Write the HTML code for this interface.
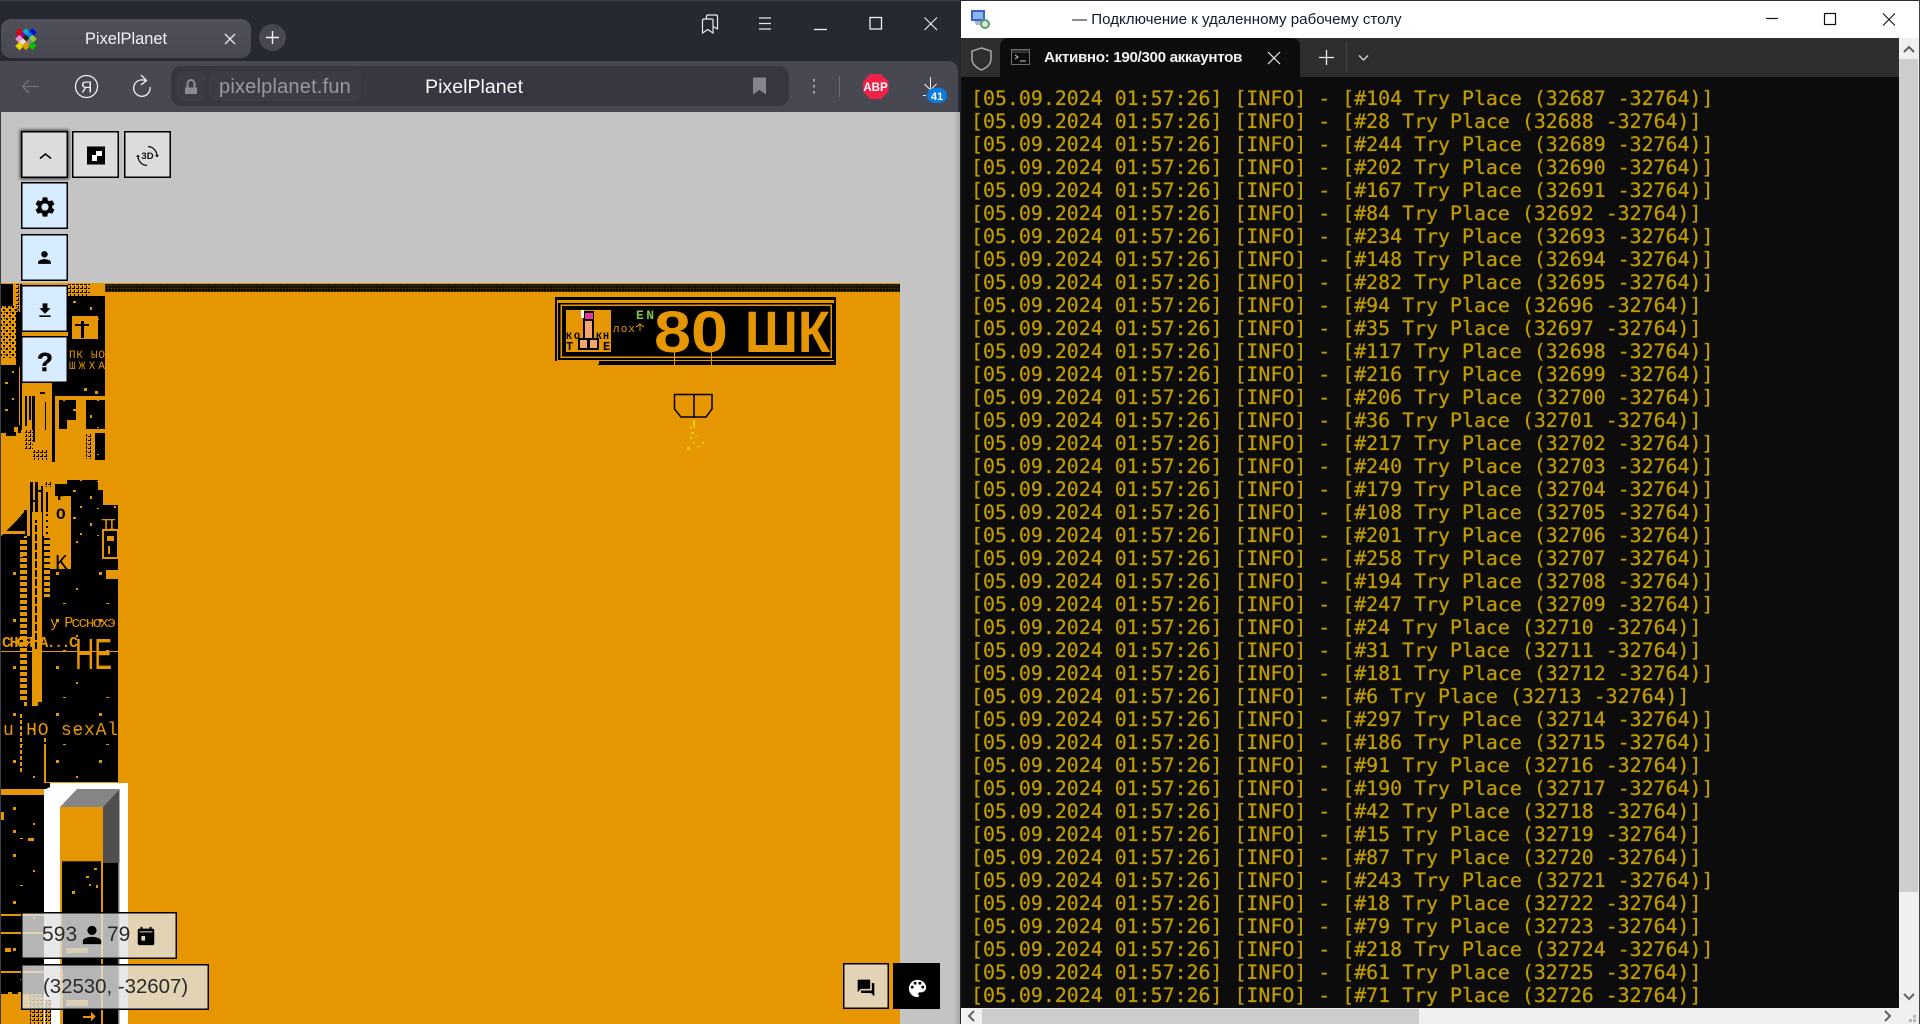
<!DOCTYPE html>
<html lang="ru"><head><meta charset="utf-8"><title>PixelPlanet</title>
<style>
html,body{margin:0;padding:0;width:1920px;height:1024px;overflow:hidden;background:#262932}
*{box-sizing:border-box}
.a{position:absolute}
body{font-family:"Liberation Sans","Noto Sans CJK SC",sans-serif;position:relative}
.btn{position:absolute;width:47px;height:47px;box-shadow:inset 0 0 0 1.5px #000}
.g{background:#dcdcdc}.b{background:#d7edff}
.btn svg{position:absolute;left:0;top:0}
pre{margin:0;font-family:"DejaVu Sans Mono","Liberation Mono",monospace;font-size:19.9px;line-height:23px;color:#c19c00;letter-spacing:0;-webkit-text-stroke:.25px #c19c00}
.box{position:absolute;background:rgba(226,226,226,.8);box-shadow:inset 0 0 0 1.5px #000;color:#2a2a2a}
</style></head><body>

<!-- LEFT BROWSER -->
<div class="a" style="left:0;top:0;width:960px;height:112px;background:#262932;overflow:hidden">
  <div class="a" style="left:0;top:0;width:960px;height:1px;background:#3c3f4a"></div>
  <div class="a" style="left:1px;top:19px;width:250px;height:39px;background:linear-gradient(#4f505a,#474852);border-radius:10px"></div>
  <div class="a" style="left:85px;top:29px;font-size:16.4px;color:#f2f2f4;line-height:20px">PixelPlanet</div>
  <div class="a" style="left:259px;top:24px;width:27px;height:27px;border-radius:50%;background:#474852"></div>
  <div class="a" style="left:0;top:61px;width:958px;height:51px;background:#474852;border-top-right-radius:10px"></div>
  <div class="a" style="left:171px;top:66px;width:618px;height:40px;background:#363741;border-radius:10px"></div>
  <div class="a" style="left:177px;top:71px;width:28px;height:30px;background:#3b3c46;border-radius:6px"></div>
  <div class="a" style="left:209px;top:71px;width:152px;height:30px;background:#3b3c46;border-radius:6px"></div>
  <div class="a" style="left:219px;top:75px;font-size:20px;line-height:24px;color:#98999f;letter-spacing:.2px">pixelplanet.fun</div>
  <div class="a" style="left:425px;top:75px;font-size:19.6px;line-height:24px;color:#fafafa;">PixelPlanet</div>
  <svg class="a" style="left:0;top:0" width="960" height="112" viewBox="0 0 960 112">
    <g>
      <rect x="16.5" y="29.5" width="6" height="6" transform="rotate(45 19.5 32.5)" fill="#e5000f"/>
      <rect x="23" y="29.5" width="6" height="6" transform="rotate(45 26 32.5)" fill="#00b3d6"/>
      <rect x="29.5" y="29.5" width="6" height="6" transform="rotate(45 32.5 32.5)" fill="#0010e0"/>
      <rect x="20" y="33" width="6" height="6" transform="rotate(45 23 36)" fill="#8a0a8a"/>
      <rect x="26.5" y="33" width="6" height="6" transform="rotate(45 29.5 36)" fill="#0a85e0"/>
      <rect x="16.5" y="36" width="6" height="6" transform="rotate(45 19.5 39)" fill="#f490c0"/>
      <rect x="23" y="36" width="6" height="6" transform="rotate(45 26 39)" fill="#222"/>
      <rect x="29.5" y="36" width="6" height="6" transform="rotate(45 32.5 39)" fill="#90d030"/>
      <rect x="20" y="39.5" width="6" height="6" transform="rotate(45 23 42.5)" fill="#dddddd"/>
      <rect x="26.5" y="39.5" width="6" height="6" transform="rotate(45 29.5 42.5)" fill="#888"/>
      <rect x="16.5" y="43" width="6" height="6" transform="rotate(45 19.5 46)" fill="#e5d900"/>
      <rect x="23" y="43" width="6" height="6" transform="rotate(45 26 46)" fill="#e59500"/>
      <rect x="29.5" y="43" width="6" height="6" transform="rotate(45 32.5 46)" fill="#02be01"/>
    </g>
    <path d="M225 34L235 44M235 34L225 44" stroke="#e8e8ea" stroke-width="1.3" fill="none"/>
    <path d="M272.5 31V44M266 37.5H279" stroke="#f0f0f0" stroke-width="1.4" fill="none"/>
    <path d="M39 86.5H22.5M29 80L22.5 86.5L29 93" stroke="#6f707a" stroke-width="1.3" fill="none"/>
    <circle cx="86.5" cy="86.5" r="11" stroke="#f0f0f0" stroke-width="1.3" fill="none"/>
    <text x="86.5" y="92.5" font-size="16" text-anchor="middle" fill="#f0f0f0" font-family="Liberation Sans">Я</text>
    <path d="M146 81A8.2 8.2 0 1 0 150 87M141 75L146.5 80.5L141 85" stroke="#f0f0f0" stroke-width="1.3" fill="none"/>
    <path d="M185 87.5H197V94H185Z" fill="#8b8c93"/><path d="M187.5 87.5V83.5A3.5 3.5 0 0 1 194.5 83.5V87.5" stroke="#8b8c93" stroke-width="2" fill="none"/>
    <path d="M753 77.5H766V94.5L759.5 90L753 94.5Z" fill="#85868d"/>
    <rect x="813" y="79" width="2" height="2.5" fill="#a0a1a8"/><rect x="813" y="85" width="2" height="2.5" fill="#a0a1a8"/><rect x="813" y="91" width="2" height="2.5" fill="#a0a1a8"/>
    <rect x="839" y="76" width="1" height="21" fill="#6a6b75"/>
    <path d="M870 74H881L888.5 81.5V91.5L881 99H870L863 91.5V81.5Z" fill="#ee2347"/>
    <text x="875.5" y="91" font-size="11.5" font-weight="700" text-anchor="middle" fill="#fff" font-family="Liberation Sans">ABP</text>
    <path d="M930.5 77V90M924.5 84L930.5 90M936.5 84L930.5 90M923 95.5H926" stroke="#eee" stroke-width="1" fill="none"/>
    <rect x="927" y="88" width="20" height="15" rx="7.5" fill="#0a7ce0"/>
    <text x="937" y="100" font-size="11" font-weight="700" text-anchor="middle" fill="#fff" font-family="Liberation Sans">41</text>
    <path d="M702.5 20.5Q702.5 19 704 19H711.5Q713 19 713 20.5V33L707.8 29.5L702.5 33ZM706.5 19V16.5Q706.5 15 708 15H716Q717.5 15 717.5 16.5V29L713 26.5" stroke="#e8e8ea" stroke-width="1.2" fill="none"/>
    <path d="M759 18H771M759 23.5H771M759 29H771" stroke="#e8e8ea" stroke-width="1.2"/>
    <path d="M814 29.5H827" stroke="#f0f0f0" stroke-width="1.3"/>
    <rect x="870" y="17.5" width="11.5" height="11.5" stroke="#f0f0f0" stroke-width="1.3" fill="none"/>
    <path d="M924.5 17.5L937 30M937 17.5L924.5 30" stroke="#f0f0f0" stroke-width="1.1"/>
  </svg>
</div>

<!-- CANVAS -->
<svg class="a" style="left:0;top:112px" width="960" height="912" viewBox="0 112 960 912" shape-rendering="crispEdges">
  <defs>
    <pattern id="dith" width="3" height="3" patternUnits="userSpaceOnUse"><rect width="3" height="3" fill="#1a1200"/><rect width="1" height="1" fill="#704900"/></pattern>
    <pattern id="rings" width="6" height="6" patternUnits="userSpaceOnUse"><rect width="6" height="6" fill="#e59600"/><rect x="0" y="0" width="2" height="2" fill="#000"/><rect x="3" y="3" width="2" height="2" fill="#000"/><rect x="4" width="1" height="1" fill="#000"/></pattern>
    <pattern id="spk" width="34" height="27" patternUnits="userSpaceOnUse"><rect width="34" height="27" fill="#000"/><rect x="5" y="4" width="3" height="2" fill="#e59600"/><rect x="22" y="10" width="2" height="3" fill="#e59600"/><rect x="12" y="20" width="2" height="2" fill="#e59600"/><rect x="29" y="22" width="2" height="1" fill="#e59600"/></pattern>
    <pattern id="spk3" width="43" height="47" patternUnits="userSpaceOnUse"><rect width="43" height="47" fill="#000"/><rect x="13" y="8" width="3" height="3" fill="#e59600"/><rect x="33" y="24" width="2" height="2" fill="#e59600"/><rect x="20" y="39" width="3" height="1" fill="#e59600"/></pattern>
    <pattern id="spk2" width="11" height="9" patternUnits="userSpaceOnUse"><rect width="11" height="9" fill="#000"/><rect x="2" y="1" width="2" height="2" fill="#e59600"/><rect x="7" y="5" width="2" height="1" fill="#e59600"/></pattern>
    <pattern id="sd" width="4" height="4" patternUnits="userSpaceOnUse"><rect width="4" height="4" fill="#e59600"/><rect width="3" height="1" fill="#000"/><rect width="1" y="2" height="2" x="2" fill="#000"/></pattern>
    <pattern id="dash" width="3" height="6" patternUnits="userSpaceOnUse"><rect width="3" height="4" fill="#e59600"/></pattern>
    <linearGradient id="shade"><stop offset="0" stop-color="#000" stop-opacity="0"/><stop offset="1" stop-color="#000" stop-opacity=".16"/></linearGradient>
  </defs>
  <rect x="0" y="112" width="960" height="912" fill="#c4c4c4"/>
  <rect x="0" y="0" width="1" height="1024" fill="#3c3f4a"/>
  <rect x="1" y="283" width="899" height="741" fill="#e59600"/>
  <rect x="105" y="284" width="795" height="8" fill="url(#dith)"/>

  <!-- upper-left art -->
  <rect x="1" y="284" width="12" height="22" fill="#000"/>
  <rect x="16" y="284" width="4" height="28" fill="url(#sd)"/>
  <rect x="1" y="306" width="16" height="52" fill="url(#rings)"/>
  <rect x="16" y="312" width="4" height="55" fill="#000"/>
  <rect x="1" y="365" width="18" height="62" fill="url(#spk)"/>
  <rect x="1" y="418" width="13" height="15" fill="#000"/>
  <rect x="6" y="432" width="10" height="4" fill="#000"/>
  <rect x="18" y="425" width="3" height="8" fill="#000"/>
  <rect x="20" y="284" width="2" height="146" fill="#000"/>

  <rect x="68" y="296" width="37" height="100" fill="url(#spk)"/>
  <rect x="68" y="284" width="22" height="12" fill="url(#sd)"/>
  <rect x="72" y="316" width="26" height="23" fill="#e59600"/>
  <rect x="81" y="321" width="3" height="17" fill="#000"/><rect x="75" y="324" width="14" height="2" fill="#000"/>
  <rect x="68" y="339" width="37" height="8" fill="#000"/>
  <rect x="68" y="347" width="37" height="23" fill="#000"/>
  <text x="69" y="358" font-size="11" fill="#e59600" font-family="Liberation Mono" textLength="36">ПК ЫО</text>
  <text x="69" y="369" font-size="11" fill="#e59600" font-family="Liberation Mono" textLength="36">ШЖХА</text>
  <rect x="68" y="370" width="37" height="13" fill="#000"/>
  <rect x="52" y="383" width="53" height="13" fill="#000"/>
  <rect x="84" y="388" width="3" height="3" fill="#e59600"/><rect x="95" y="391" width="3" height="3" fill="#e59600"/>
  <rect x="52" y="396" width="3" height="66" fill="#000"/>
  <rect x="59" y="400" width="17" height="20" fill="url(#spk)"/>
  <rect x="59" y="420" width="8" height="9" fill="#000"/>
  <rect x="86" y="400" width="19" height="29" fill="url(#spk)"/>
  <rect x="86" y="433" width="6" height="26" fill="url(#sd)"/>
  <rect x="95" y="433" width="10" height="27" fill="url(#spk)"/>
  <rect x="25" y="396" width="2" height="30" fill="#000"/><rect x="29" y="396" width="2" height="24" fill="#000"/><rect x="32" y="396" width="3" height="46" fill="#000"/>
  <rect x="25" y="430" width="8" height="20" fill="url(#sd)"/>
  <rect x="45" y="402" width="1" height="28" fill="#000"/>
  <rect x="33" y="450" width="14" height="10" fill="url(#sd)"/>
  <rect x="40" y="392" width="5" height="2" fill="#000"/>

  <!-- lower-left art -->
  <path d="M55 484H67V480H98V490H103V505H118V640H71V569H50V512H71V496H55Z" fill="url(#spk)"/>
  <rect x="55" y="484" width="12" height="4" fill="#000"/>
  <rect x="30" y="482" width="3" height="58" fill="#000"/><rect x="35" y="482" width="3" height="58" fill="#000"/><rect x="41" y="486" width="2" height="54" fill="#000"/><rect x="45" y="481" width="7" height="6" fill="url(#sd)"/><rect x="46" y="492" width="2" height="48" fill="#000"/><rect x="24" y="510" width="3" height="30" fill="#000"/>
  <rect x="36" y="490" width="5" height="2" fill="#000"/><rect x="33" y="500" width="5" height="2" fill="#000"/><rect x="30" y="520" width="12" height="2" fill="#000"/>
  <path d="M1 536L18 519L24 512V540H1Z" fill="#000"/>
  <rect x="1" y="536" width="117" height="230" fill="url(#spk3)"/>
  <rect x="1" y="766" width="117" height="16" fill="url(#spk3)"/>
  <rect x="1" y="782" width="43" height="7" fill="#000"/>
  <rect x="50" y="512" width="21" height="57" fill="#e59600"/>
  <text x="57" y="500" font-size="16" fill="#000" font-family="Liberation Mono" font-weight="700">P</text>
  <text x="56" y="519" font-size="16" fill="#000" font-family="Liberation Mono" font-weight="700">O</text>
  <text x="55" y="569" font-size="21" fill="#000" font-family="Liberation Mono">K</text>
  <!-- orange strokes on the mass -->
  <rect x="20" y="540" width="4" height="160" fill="url(#dash)"/>
  <rect x="32" y="512" width="10" height="190" fill="#e59600"/>
  <rect x="35" y="520" width="2" height="130" fill="url(#spk2)"/>
  <rect x="24" y="536" width="3" height="170" fill="url(#dash)"/>
  <rect x="44" y="512" width="6" height="85" fill="url(#dash)"/>
  <rect x="32" y="700" width="6" height="6" fill="#e59600"/>
  <rect x="1" y="531" width="24" height="3" fill="#e59600"/>
  <rect x="99" y="512" width="19" height="22" fill="#000"/>
  <text x="101" y="530" font-size="17" fill="#e59600" font-family="Liberation Mono" textLength="16">TI</text>
  <rect x="103" y="530" width="15" height="28" fill="#000" stroke="#e59600" stroke-width="2"/>
  <rect x="107" y="536" width="7" height="5" fill="#e59600"/><rect x="108" y="546" width="2" height="8" fill="#e59600"/>
  <rect x="106" y="570" width="12" height="9" fill="#e59600"/>
  <text x="50" y="627" font-size="15" fill="#e59600" font-family="Liberation Mono" textLength="66">y Рссноxэ</text>
  <text x="2" y="647" font-size="15" fill="#e59600" font-family="Liberation Mono" font-weight="700" textLength="76">СНОЯ А...С</text>
  <rect x="1" y="651" width="117" height="2" fill="url(#dash)"/>
  <text x="75" y="669" font-size="44" fill="#e59600" font-family="Liberation Sans" textLength="37" lengthAdjust="spacingAndGlyphs">HE</text>
  <text x="3" y="735" font-size="18" fill="#e59600" font-family="Liberation Mono" textLength="115">u HO sexAl</text>
  <rect x="44" y="737" width="2" height="26" fill="url(#dash)"/>
  <rect x="20" y="712" width="2" height="60" fill="url(#dash)"/>
  <rect x="44" y="745" width="2" height="37" fill="#e59600"/>
  <rect x="1" y="789" width="44" height="6" fill="#e59600"/>
  <rect x="1" y="795" width="43" height="199" fill="url(#spk3)"/>
  <rect x="1" y="812" width="3" height="8" fill="#e59600"/><rect x="13" y="830" width="3" height="3" fill="#e59600"/><rect x="28" y="838" width="6" height="3" fill="#e59600"/>
  <rect x="1" y="914" width="60" height="2" fill="#e59600"/><rect x="1" y="932" width="60" height="2" fill="#e59600"/><rect x="1" y="971" width="60" height="2" fill="#e59600"/>
  <rect x="5" y="948" width="6" height="4" fill="#e59600"/>
  <path d="M1 994H8V992H12V994H18V992H22V994H30V1024H1Z" fill="#e59600"/>
  <rect x="30" y="994" width="14" height="30" fill="url(#sd)"/>

  <!-- white frame -->
  <rect x="44" y="783" width="84" height="241" fill="#fff"/>
  <path d="M44 783H50V787L46 789H44Z" fill="#000"/>
  <rect x="60" y="807" width="43" height="217" fill="#e59600"/>
  <g shape-rendering="auto">
    <path d="M77 789H119.5L103 807H60Z" fill="#858585"/>
    <path d="M103 807L119.5 789V864H103Z" fill="#4f4f4f"/>
  </g>
  <rect x="103" y="863" width="16" height="161" fill="#000"/>
  <rect x="118" y="863" width="1.5" height="161" fill="#777"/>
  <rect x="62" y="861" width="39" height="163" fill="#000"/>
  <rect x="62" y="861" width="39" height="1" fill="#4a2e00"/>
  <rect x="94" y="868" width="3" height="2" fill="#e59600"/><rect x="86" y="876" width="3" height="2" fill="#e59600"/><rect x="72" y="891" width="3" height="3" fill="#e59600"/><rect x="96" y="885" width="2" height="3" fill="#e59600"/><rect x="89" y="884" width="2" height="2" fill="#e59600"/>
  <rect x="45" y="1000" width="6" height="24" fill="url(#sd)"/>
  <path d="M83 1016H91V1012L96 1016.5L91 1021V1018H83Z" fill="#e59600"/>
  <rect x="66" y="1000" width="22" height="6" fill="#e59600" opacity=".9"/>
  <rect x="66" y="948" width="22" height="5" fill="#e59600" opacity=".8"/>
  <rect x="60" y="970" width="3" height="54" fill="#e59600"/>

  <!-- sign -->
  <rect x="555" y="297" width="281" height="3" fill="#000"/>
  <rect x="555" y="297" width="2" height="64" fill="#000"/>
  <rect x="834" y="297" width="2" height="68" fill="#000"/>
  <rect x="599" y="361" width="237" height="4" fill="#000"/>
  <rect x="598" y="364" width="3" height="1" fill="#000"/>
  <rect x="558" y="303" width="276" height="57" fill="#000"/>
  <rect x="561" y="305" width="270" height="52" fill="#000" stroke="#e59600" stroke-width="1.5"/>
  <rect x="566" y="310" width="45" height="42" fill="#e59600"/>
  <rect x="674" y="352" width="1" height="13" fill="#e59600"/><rect x="711" y="352" width="1" height="13" fill="#e59600"/>
  <rect x="583" y="311" width="11" height="35" fill="#000"/>
  <rect x="585" y="321" width="7" height="24" fill="#f4a46e"/>
  <rect x="585" y="313" width="8" height="6" fill="#e4359f"/>
  <rect x="581" y="310" width="3" height="8" fill="#fff"/>
  <rect x="578" y="338" width="21" height="12" fill="#000"/>
  <rect x="580" y="340" width="7" height="8" fill="#f4a46e"/><rect x="590" y="340" width="7" height="8" fill="#f4a46e"/>
  <text x="566" y="339" font-size="10" fill="#000" font-weight="700" font-family="Liberation Mono" textLength="14">КО</text>
  <text x="596" y="339" font-size="10" fill="#000" font-weight="700" font-family="Liberation Mono" textLength="13">КН</text>
  <text x="566" y="350" font-size="12" fill="#000" font-weight="700" font-family="Liberation Mono">Т</text>
  <text x="603" y="350" font-size="12" fill="#000" font-weight="700" font-family="Liberation Mono">Е</text>
  <text x="636" y="319" font-size="13" fill="#7cc242" font-weight="700" font-family="Liberation Mono" textLength="18">EN</text>
  <text x="613" y="332" font-size="11" fill="#e59600" font-family="Liberation Mono" textLength="22">лох</text>
  <path d="M640 324V331M636 327L640 324L644 327" stroke="#e59600" stroke-width="1" fill="none"/>
  <g shape-rendering="auto" fill="#e59600" font-family="Liberation Sans" font-weight="700">
    <text x="654" y="352" font-size="58" textLength="74" lengthAdjust="spacingAndGlyphs">80</text>
    <text x="745" y="352" font-size="58" textLength="85" lengthAdjust="spacingAndGlyphs">ШК</text>
  </g>
  <path d="M674.5 394.5H712V409L706 417H681L674.5 409ZM694 394.5V418" stroke="#000" stroke-width="1.5" fill="none" shape-rendering="auto"/>
  <rect x="693" y="420" width="2" height="8" fill="#e6d400"/>
  <path d="M690 427h2v2h-2zM691 432h3v2h-3zM690 437h2v2h-2zM695 436h2v1h-2zM693 442h2v2h-2zM702 442h2v2h-2zM697 446h3v1h-3zM687 447h3v3h-3z" fill="#e6d400"/>
  <rect x="954" y="112" width="6" height="912" fill="url(#shade)"/>
</svg>

<!-- pixelplanet UI -->
<div class="btn g" style="left:21px;top:131px;box-shadow:inset 0 0 0 1.5px #000,0 0 3px 1px rgba(0,0,0,.75)">
  <svg width="47" height="47" viewBox="0 0 47 47"><path d="M19 27.5L24.5 23L30 27.5" stroke="#000" stroke-width="1.6" fill="none"/></svg>
</div>
<div class="btn g" style="left:72px;top:131px"><svg width="47" height="47" viewBox="0 0 47 47"><path d="M15 15.500H33V33.500H15Z" fill="#000"/><path d="M24 20H30V25H25V30H20V24H24Z" fill="#fff"/></svg></div>
<div class="btn g" style="left:124px;top:131px"><svg width="47" height="47" viewBox="0 0 47 47"><text x="23.5" y="28" font-size="9.5" font-weight="700" text-anchor="middle" font-family="Liberation Sans" fill="#111">3D</text><path d="M24 15.5A9.5 9.5 0 0 1 33 25M23 34.5A9.5 9.5 0 0 1 14 25" stroke="#111" stroke-width="1.3" fill="none"/><path d="M31 24L33 26.5L35 24M12 26L14 23.5L16 26" fill="#111"/></svg></div>
<div class="btn b" style="left:21px;top:182px"><svg width="47" height="47" viewBox="0 0 47 47"><g transform="translate(12,13)"><path d="M19.14 12.94c.04-.3.06-.61.06-.94 0-.32-.02-.64-.07-.94l2.03-1.58a.49.49 0 0 0 .12-.61l-1.92-3.32a.488.488 0 0 0-.59-.22l-2.39.96c-.5-.38-1.03-.7-1.62-.94l-.36-2.54a.484.484 0 0 0-.48-.41h-3.84c-.24 0-.43.17-.47.41l-.36 2.54c-.59.24-1.13.57-1.62.94l-2.39-.96c-.22-.08-.47 0-.59.22L2.74 8.87c-.12.21-.08.47.12.61l2.03 1.58c-.05.3-.09.63-.09.94s.02.64.07.94l-2.03 1.58a.49.49 0 0 0-.12.61l1.92 3.32c.12.22.37.29.59.22l2.39-.96c.5.38 1.03.7 1.62.94l.36 2.54c.05.24.24.41.48.41h3.84c.24 0 .44-.17.47-.41l.36-2.54c.59-.24 1.13-.56 1.62-.94l2.39.96c.22.08.47 0 .59-.22l1.92-3.32c.12-.22.07-.47-.12-.61l-2.01-1.58zM12 15.6c-1.98 0-3.6-1.62-3.6-3.6s1.62-3.6 3.6-3.6 3.6 1.62 3.6 3.6-1.62 3.6-3.6 3.6z" fill="#000"/></g></svg></div>
<div class="btn b" style="left:21px;top:234px"><svg width="47" height="47" viewBox="0 0 47 47"><g transform="translate(11.5,11.5)"><path d="M12 12c2.21 0 4-1.79 4-4s-1.79-4-4-4-4 1.79-4 4 1.79 4 4 4zm0 2c-2.67 0-8 1.34-8 4v2h16v-2c0-2.66-5.33-4-8-4z" fill="#000" transform="translate(2.4,2.4) scale(.8)"/></g></svg></div>
<div class="btn b" style="left:21px;top:285px"><svg width="47" height="47" viewBox="0 0 47 47"><g transform="translate(14.4,16) scale(.8)"><path d="M19 9h-4V3H9v6H5l7 7 7-7zM5 18v2h14v-2H5z" fill="#000"/></g></svg></div>
<div class="btn b" style="left:21px;top:336px"><svg width="47" height="47" viewBox="0 0 47 47"><text x="24" y="35" font-size="26" font-weight="700" text-anchor="middle" font-family="Liberation Sans" fill="#000" stroke="#000" stroke-width=".6">?</text></svg></div>

<div class="box" style="left:21px;top:912px;width:156px;height:47px">
  <div class="a" style="left:21px;top:11px;font-size:21px;line-height:24px;letter-spacing:.1px">593</div>
  <svg class="a" style="left:60px;top:12px" width="22" height="22" viewBox="0 0 24 24"><path d="M12 12c2.76 0 5-2.24 5-5s-2.24-5-5-5-5 2.24-5 5 2.24 5 5 5zm0 2c-3.34 0-10 1.34-10 4.5V22h20v-3.5c0-3.16-6.66-4.5-10-4.5z" fill="#000"/></svg>
  <div class="a" style="left:86px;top:11px;font-size:21px;line-height:24px">79</div>
  <svg class="a" style="left:114px;top:13px" width="22" height="22" viewBox="0 0 24 24"><path d="M19 4h-1V2h-2v2H8V2H6v2H5a2 2 0 0 0-2 2v14c0 1.1.9 2 2 2h14a2 2 0 0 0 2-2V6a2 2 0 0 0-2-2zm0 4H5V7h14zM11 17H7v-5h4z" fill="#000" fill-rule="evenodd"/></svg>
</div>
<div class="box" style="left:21px;top:964px;width:188px;height:46px">
  <div class="a" style="left:22px;top:11px;font-size:20.4px;line-height:24px;white-space:nowrap">(32530, -32607)</div>
</div>
<div class="box" style="left:843px;top:963px;width:46px;height:46px">
  <svg class="a" style="left:12.5px;top:14.5px" width="20" height="20" viewBox="0 0 24 24"><path d="M21 6h-2v9H6v2c0 .55.45 1 1 1h11l4 4V7c0-.55-.45-1-1-1zm-4 6V3c0-.55-.45-1-1-1H3c-.55 0-1 .45-1 1v14l4-4h10c.55 0 1-.45 1-1z" fill="#000"/></svg>
</div>
<div class="a" style="left:893px;top:963px;width:47px;height:46px;background:#000">
  <svg class="a" style="left:12.5px;top:14px" width="23" height="23" viewBox="0 0 24 24"><path d="M12 3a9 9 0 0 0 0 18c.83 0 1.5-.67 1.5-1.5 0-.39-.15-.74-.39-1.01-.23-.26-.38-.61-.38-.99 0-.83.67-1.5 1.5-1.5H16c2.76 0 5-2.24 5-5 0-4.42-4.03-8-9-8zm-5.5 9a1.5 1.5 0 1 1 0-3 1.5 1.5 0 0 1 0 3zm3-4a1.5 1.5 0 1 1 0-3 1.5 1.5 0 0 1 0 3zm5 0a1.5 1.5 0 1 1 0-3 1.5 1.5 0 0 1 0 3zm3 4a1.5 1.5 0 1 1 0-3 1.5 1.5 0 0 1 0 3z" fill="#fff"/></svg>
</div>

<!-- RIGHT WINDOW -->
<div class="a" style="left:960px;top:0;width:960px;height:1024px;background:#0c0c0c;overflow:hidden">
  <div class="a" style="left:0;top:0;width:960px;height:38px;background:#fff;border-top:1px solid #2b2d35"></div>
  <div class="a" style="left:0;top:0;width:1px;height:1024px;background:#26262c"></div>
  <svg class="a" style="left:10px;top:8px" width="22" height="22" viewBox="0 0 22 22">
    <rect x="1" y="2" width="14" height="11" fill="#3a63c8"/><rect x="3" y="4" width="10" height="7" fill="#8db4f0"/><path d="M4 13H12L15 17H6Z" fill="#aeb6c6"/><circle cx="15" cy="16" r="5" fill="#5a9e6a"/><circle cx="15" cy="16" r="3" fill="#d8e8d8"/>
  </svg>
  <div class="a" style="left:112px;top:9px;font-size:15.1px;line-height:21px;color:#0f1c2c;white-space:nowrap">— Подключение к удаленному рабочему столу</div>
  <svg class="a" style="left:800px;top:0" width="160" height="38" viewBox="0 0 160 38">
    <path d="M6 18.5H18" stroke="#111" stroke-width="1.2"/>
    <rect x="64.5" y="13.5" width="11" height="11" stroke="#111" stroke-width="1.2" fill="none"/>
    <path d="M123 13.5L135 25.5M135 13.5L123 25.5" stroke="#111" stroke-width="1.1"/>
  </svg>

  <div class="a" style="left:1px;top:38px;width:938px;height:39px;background:#2e2e2e"></div>
  <div class="a" style="left:40px;top:38px;width:300px;height:39px;background:#0c0c0c;border-radius:8px 8px 0 0"></div>
  <svg class="a" style="left:0;top:38px" width="420" height="39" viewBox="0 0 420 39">
    <path d="M21.5 10L31 13V21C31 27 26 30 21.5 32C17 30 12 27 12 21V13Z" stroke="#a8a8a8" stroke-width="1.5" fill="none"/>
    <rect x="51.5" y="11.5" width="18" height="15" fill="#0c0c0c" stroke="#707070" stroke-width="1"/>
    <rect x="52" y="12" width="17" height="3" fill="#333"/>
    <path d="M55 17L58 19L55 21M60 23H66" stroke="#cccccc" stroke-width="1" fill="none"/>
    <path d="M308 14L320 26M320 14L308 26" stroke="#e8e8e8" stroke-width="1.2"/>
    <path d="M366.5 12V27M359 19.5H374" stroke="#eeeeee" stroke-width="1.3"/>
    <rect x="386" y="4" width="1" height="30" fill="#454545"/>
    <path d="M399 17.5L403.5 22L408 17.5" stroke="#ddd" stroke-width="1.3" fill="none"/>
  </svg>
  <div class="a" style="left:84px;top:47px;font-size:15.2px;line-height:21px;color:#f2f2f2;font-weight:700;white-space:nowrap;letter-spacing:-.35px">Активно: 190/300 аккаунтов</div>

<pre class="a" style="left:11px;top:87px">[05.09.2024 01:57:26] [INFO] - [#104 Try Place (32687 -32764)]
[05.09.2024 01:57:26] [INFO] - [#28 Try Place (32688 -32764)]
[05.09.2024 01:57:26] [INFO] - [#244 Try Place (32689 -32764)]
[05.09.2024 01:57:26] [INFO] - [#202 Try Place (32690 -32764)]
[05.09.2024 01:57:26] [INFO] - [#167 Try Place (32691 -32764)]
[05.09.2024 01:57:26] [INFO] - [#84 Try Place (32692 -32764)]
[05.09.2024 01:57:26] [INFO] - [#234 Try Place (32693 -32764)]
[05.09.2024 01:57:26] [INFO] - [#148 Try Place (32694 -32764)]
[05.09.2024 01:57:26] [INFO] - [#282 Try Place (32695 -32764)]
[05.09.2024 01:57:26] [INFO] - [#94 Try Place (32696 -32764)]
[05.09.2024 01:57:26] [INFO] - [#35 Try Place (32697 -32764)]
[05.09.2024 01:57:26] [INFO] - [#117 Try Place (32698 -32764)]
[05.09.2024 01:57:26] [INFO] - [#216 Try Place (32699 -32764)]
[05.09.2024 01:57:26] [INFO] - [#206 Try Place (32700 -32764)]
[05.09.2024 01:57:26] [INFO] - [#36 Try Place (32701 -32764)]
[05.09.2024 01:57:26] [INFO] - [#217 Try Place (32702 -32764)]
[05.09.2024 01:57:26] [INFO] - [#240 Try Place (32703 -32764)]
[05.09.2024 01:57:26] [INFO] - [#179 Try Place (32704 -32764)]
[05.09.2024 01:57:26] [INFO] - [#108 Try Place (32705 -32764)]
[05.09.2024 01:57:26] [INFO] - [#201 Try Place (32706 -32764)]
[05.09.2024 01:57:26] [INFO] - [#258 Try Place (32707 -32764)]
[05.09.2024 01:57:26] [INFO] - [#194 Try Place (32708 -32764)]
[05.09.2024 01:57:26] [INFO] - [#247 Try Place (32709 -32764)]
[05.09.2024 01:57:26] [INFO] - [#24 Try Place (32710 -32764)]
[05.09.2024 01:57:26] [INFO] - [#31 Try Place (32711 -32764)]
[05.09.2024 01:57:26] [INFO] - [#181 Try Place (32712 -32764)]
[05.09.2024 01:57:26] [INFO] - [#6 Try Place (32713 -32764)]
[05.09.2024 01:57:26] [INFO] - [#297 Try Place (32714 -32764)]
[05.09.2024 01:57:26] [INFO] - [#186 Try Place (32715 -32764)]
[05.09.2024 01:57:26] [INFO] - [#91 Try Place (32716 -32764)]
[05.09.2024 01:57:26] [INFO] - [#190 Try Place (32717 -32764)]
[05.09.2024 01:57:26] [INFO] - [#42 Try Place (32718 -32764)]
[05.09.2024 01:57:26] [INFO] - [#15 Try Place (32719 -32764)]
[05.09.2024 01:57:26] [INFO] - [#87 Try Place (32720 -32764)]
[05.09.2024 01:57:26] [INFO] - [#243 Try Place (32721 -32764)]
[05.09.2024 01:57:26] [INFO] - [#18 Try Place (32722 -32764)]
[05.09.2024 01:57:26] [INFO] - [#79 Try Place (32723 -32764)]
[05.09.2024 01:57:26] [INFO] - [#218 Try Place (32724 -32764)]
[05.09.2024 01:57:26] [INFO] - [#61 Try Place (32725 -32764)]
[05.09.2024 01:57:26] [INFO] - [#71 Try Place (32726 -32764)]</pre>

  <!-- scrollbars -->
  <div class="a" style="left:939px;top:38px;width:20px;height:986px;background:#f0f0f0"></div>
  <div class="a" style="left:939px;top:59px;width:19px;height:833px;background:#cdcdcd"></div>
  <div class="a" style="left:1px;top:1008px;width:958px;height:16px;background:#f0f0f0"></div>
  <div class="a" style="left:22px;top:1009px;width:437px;height:15px;background:#cdcdcd"></div>
  <div class="a" style="left:959px;top:0;width:1px;height:1024px;background:#444"></div>
  <svg class="a" style="left:0;top:0" width="960" height="1024" viewBox="0 0 960 1024">
    <path d="M944 52L949 47L954 52" stroke="#606060" stroke-width="2" fill="none"/>
    <path d="M944 994L949 999L954 994" stroke="#606060" stroke-width="2" fill="none"/>
    <path d="M14 1011L9 1016L14 1021" stroke="#606060" stroke-width="2" fill="none"/>
    <path d="M925 1011L930 1016L925 1021" stroke="#606060" stroke-width="2" fill="none"/>
    <path d="M953 1015h3v3h-3zM949 1019h3v3h-3zM953 1019h3v3h-3z" fill="#b8b8b8"/>
  </svg>
</div>
</body></html>
